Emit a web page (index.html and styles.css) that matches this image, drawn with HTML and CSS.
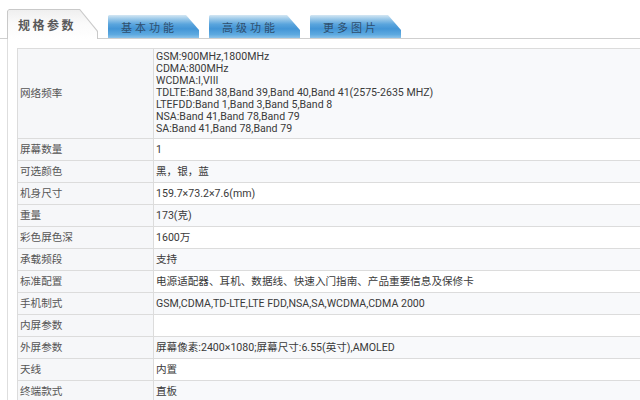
FILE: index.html
```html
<!DOCTYPE html>
<html lang="zh">
<head>
<meta charset="utf-8">
<title>规格参数</title>
<link rel="stylesheet" href="styles.css">
</head>
<body>
<div class="tabs">
  <div class="tab tab-active"><div class="tab-face">规格参数</div></div>
  <div class="tab tab-blue">基本功能</div>
  <div class="tab tab-blue">高级功能</div>
  <div class="tab tab-blue">更多图片</div>
</div>
<div class="panel">
  <table class="spec">
    <tr class="odd">
      <th>网络频率</th>
      <td class="multi">GSM:900MHz,1800MHz<br>CDMA:800MHz<br>WCDMA:I,VIII<br>TDLTE:Band 38,Band 39,Band 40,Band 41(2575-2635 MHZ)<br>LTEFDD:Band 1,Band 3,Band 5,Band 8<br>NSA:Band 41,Band 78,Band 79<br>SA:Band 41,Band 78,Band 79</td>
    </tr>
    <tr><th>屏幕数量</th><td>1</td></tr>
    <tr class="odd"><th>可选颜色</th><td>黑，银，蓝</td></tr>
    <tr><th>机身尺寸</th><td>159.7×73.2×7.6(mm)</td></tr>
    <tr class="odd"><th>重量</th><td>173(克)</td></tr>
    <tr><th>彩色屏色深</th><td>1600万</td></tr>
    <tr class="odd"><th>承载频段</th><td>支持</td></tr>
    <tr><th>标准配置</th><td>电源适配器、耳机、数据线、快速入门指南、产品重要信息及保修卡</td></tr>
    <tr class="odd"><th>手机制式</th><td>GSM,CDMA,TD-LTE,LTE FDD,NSA,SA,WCDMA,CDMA 2000</td></tr>
    <tr><th>内屏参数</th><td></td></tr>
    <tr class="odd"><th>外屏参数</th><td>屏幕像素:2400×1080;屏幕尺寸:6.55(英寸),AMOLED</td></tr>
    <tr><th>天线</th><td>内置</td></tr>
    <tr class="odd"><th>终端款式</th><td>直板</td></tr>
  </table>
</div>
</body>
</html>
```
FILE: styles.css
```css
html, body {
  margin: 0;
  padding: 0;
  background: #ffffff;
  overflow: hidden;
  width: 640px;
  height: 400px;
}
body {
  font-family: Roboto, "Noto Sans CJK SC", sans-serif;
  color: #333;
}
.tabs {
  display: flex;
  align-items: flex-end;
  gap: 10px;
  height: 38px;
  padding-left: 7px;
  border-bottom: 1px solid #cfcfcf;
  box-sizing: content-box;
}
.tab {
  flex: none;
  box-sizing: border-box;
}
.tab-active {
  width: 91px;
  height: 30px;
  margin-bottom: -1px;
  background: #c9c9c9;
  clip-path: polygon(0 2px, 2px 0, 73px 0, 91px 22px, 91px 100%, 0 100%);
  display: flex;
  padding: 1px 1px 0 1px;
}
.tab-face {
  flex: 1;
  background: linear-gradient(to bottom, #efefef 0%, #fafafa 45%, #ffffff 100%);
  clip-path: polygon(0 1px, 1px 0, 71.5px 0, 89px 21.5px, 89px 100%, 0 100%);
  font-family: "Noto Sans CJK SC", sans-serif;
  font-weight: 700;
  font-size: 12px;
  letter-spacing: 2.5px;
  color: #5a5a5a;
  padding: 7px 0 0 10px;
  line-height: 16px;
}
.tab-blue {
  width: 91px;
  height: 23px;
  background: linear-gradient(to bottom, #d4e7f3 0%, #9fcbea 16%, #5aa5dd 40%, #4395d6 60%, #5eaae0 85%, #8cc3ea 100%);
  clip-path: polygon(0 1px, 1px 0, 78px 0, 91px 15px, 91px 100%, 0 100%);
  font-family: "Noto Sans CJK SC", sans-serif;
  font-size: 11px;
  letter-spacing: 3px;
  color: #2f4f6e;
  padding: 4px 0 0 13px;
  line-height: 16px;
}
.panel {
  box-sizing: border-box;
  border-left: 1px solid #dedede;
  margin-left: 7px;
  padding: 9px 0 0 9px;
  height: 361px;
  overflow: hidden;
}
.spec {
  border-collapse: collapse;
  width: 624px;
  font-size: 10.6px;
}
.spec th, .spec td {
  border: 1px solid #dcdcdc;
  height: 21px;
  padding: 0 0 0 2px;
  line-height: 14px;
  text-align: left;
  vertical-align: middle;
}
.spec th {
  width: 133px;
  font-weight: 400;
  color: #555;
  background: #f6f7f9;
}
.spec td {
  color: #3a3a3a;
  background: #ffffff;
}
.spec tr.odd td {
  background: #f8f9fb;
}
.spec td.multi {
  line-height: 12px;
  padding-top: 2px;
  padding-bottom: 3px;
  height: 84px;
}
```
